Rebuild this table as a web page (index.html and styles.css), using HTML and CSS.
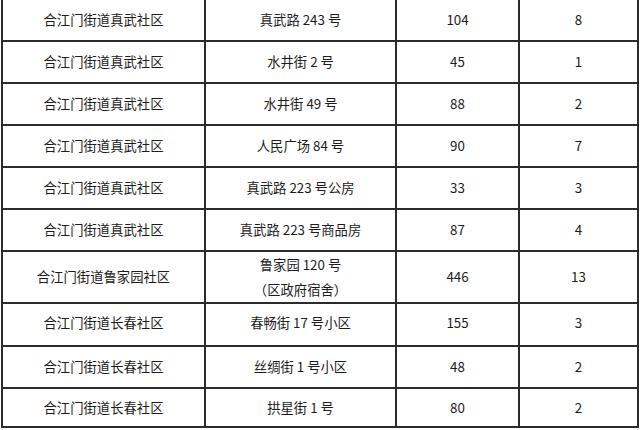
FILE: index.html
```html
<!DOCTYPE html>
<html lang="zh-CN">
<head>
<meta charset="utf-8">
<link rel="stylesheet" href="styles.css">
</head>
<body>
<div class="table">
  <div class="row r42"><div class="cell">合江门街道真武社区</div><div class="cell">真武路 243 号</div><div class="cell">104</div><div class="cell">8</div></div>
  <div class="row r42"><div class="cell">合江门街道真武社区</div><div class="cell">水井街 2 号</div><div class="cell">45</div><div class="cell">1</div></div>
  <div class="row r42"><div class="cell">合江门街道真武社区</div><div class="cell">水井街 49 号</div><div class="cell">88</div><div class="cell">2</div></div>
  <div class="row r42"><div class="cell">合江门街道真武社区</div><div class="cell">人民广场 84 号</div><div class="cell">90</div><div class="cell">7</div></div>
  <div class="row r42"><div class="cell">合江门街道真武社区</div><div class="cell">真武路 223 号公房</div><div class="cell">33</div><div class="cell">3</div></div>
  <div class="row r42"><div class="cell">合江门街道真武社区</div><div class="cell">真武路 223 号商品房</div><div class="cell">87</div><div class="cell">4</div></div>
  <div class="row r48"><div class="cell">合江门街道鲁家园社区</div><div class="cell two">鲁家园 120 号<br>（区政府宿舍）</div><div class="cell">446</div><div class="cell">13</div></div>
  <div class="row r47"><div class="cell">合江门街道长春社区</div><div class="cell">春畅街 17 号小区</div><div class="cell">155</div><div class="cell">3</div></div>
  <div class="row r42"><div class="cell">合江门街道长春社区</div><div class="cell">丝绸街 1 号小区</div><div class="cell">48</div><div class="cell">2</div></div>
  <div class="row r39"><div class="cell">合江门街道长春社区</div><div class="cell">拱星街 1 号</div><div class="cell">80</div><div class="cell">2</div></div>
</div>
</body>
</html>
```
FILE: styles.css
```css
html, body {
  margin: 0;
  padding: 0;
  background: #ffffff;
}
body {
  font-family: "Noto Sans CJK SC", "Liberation Sans", sans-serif;
  font-size: 13.33px;
  color: #1c1c1c;
}
.table {
  margin-left: 1px;
  width: 638px;
  border-left: 2px solid #2b2b2b;
}
.row {
  display: grid;
  grid-template-columns: 203px 191px 123px 119px;
}
.r42 { height: 42px; }
.r48 { height: 48px; }
.r47 { height: 47px; }
.r39 { height: 39px; }
.cell {
  box-sizing: border-box;
  border-right: 2px solid #2b2b2b;
  border-bottom: 2px solid #2b2b2b;
  display: flex;
  align-items: center;
  justify-content: center;
  text-align: center;
  line-height: 20px;
}
.two {
  line-height: 25px;
}
```
